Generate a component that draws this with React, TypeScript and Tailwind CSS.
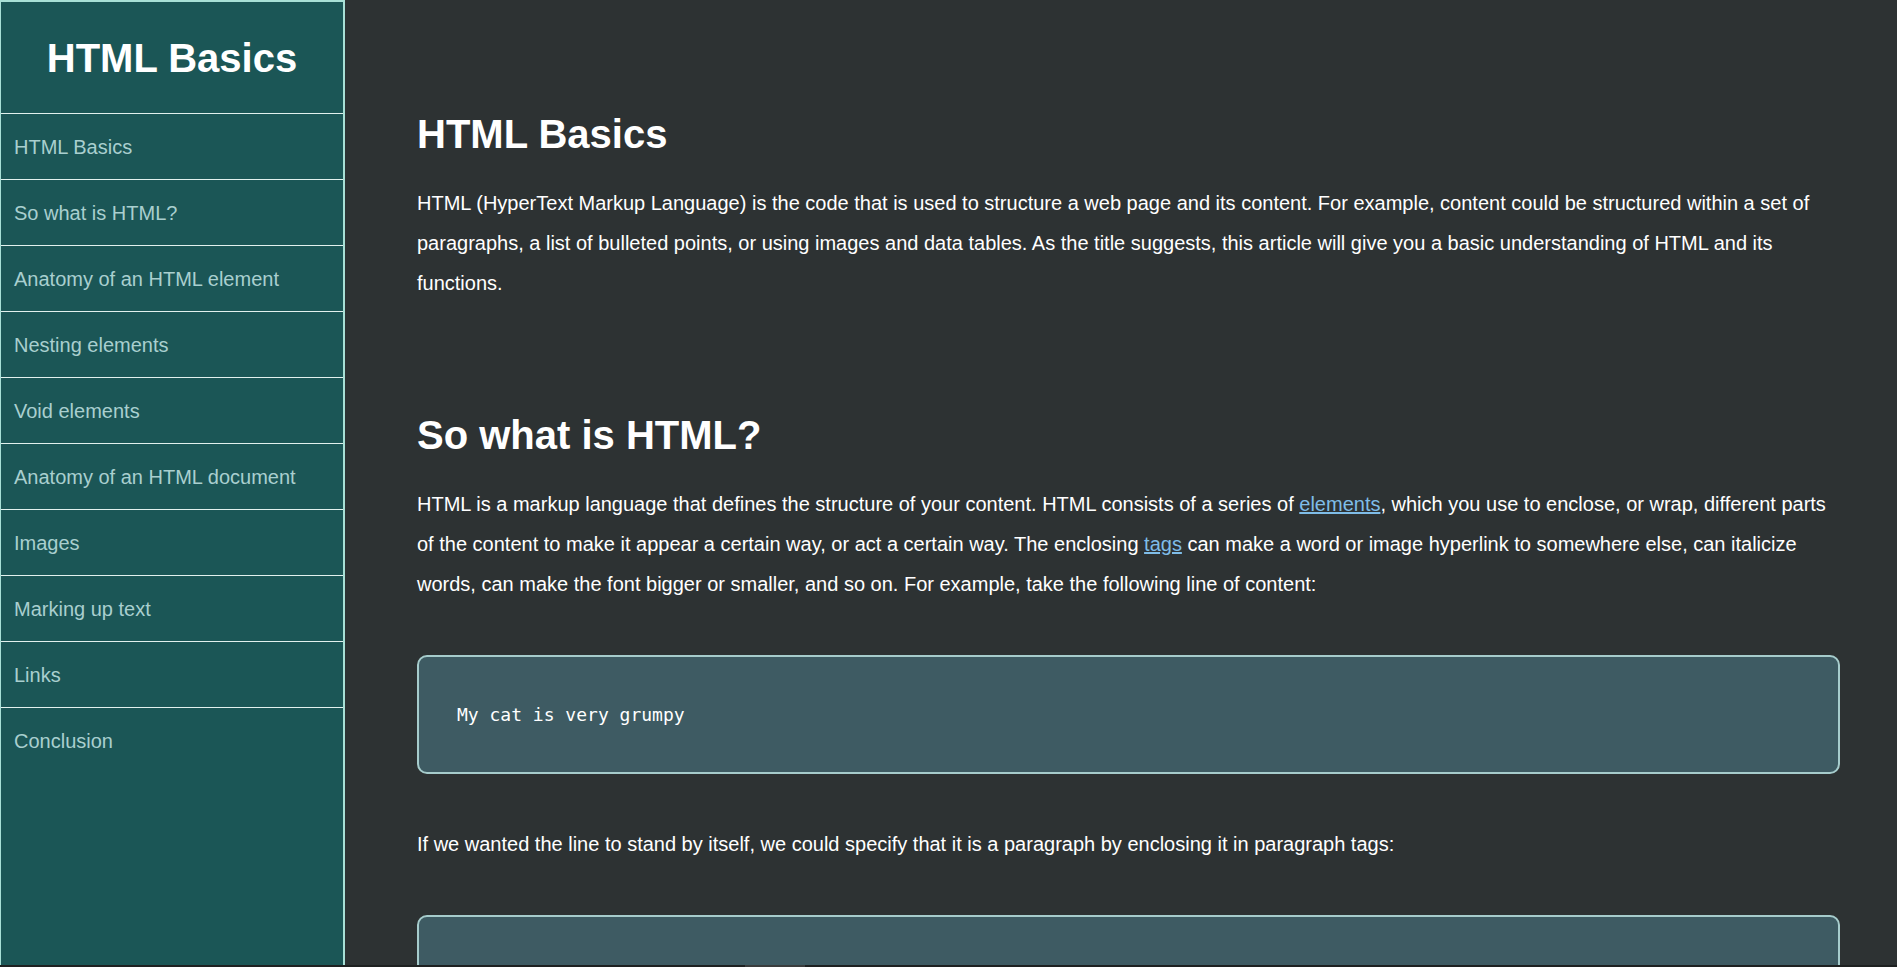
import React from "react";

const navItems = [
  "HTML Basics",
  "So what is HTML?",
  "Anatomy of an HTML element",
  "Nesting elements",
  "Void elements",
  "Anatomy of an HTML document",
  "Images",
  "Marking up text",
  "Links",
  "Conclusion",
];

function Code({ children }: { children: React.ReactNode }) {
  return (
    <pre
      className="mt-[51px] rounded-[10px] border-2 border-[#a6cccc] bg-[#3e5b63] px-[38px] py-[43px] text-[18px] leading-[29px] text-white"
      style={{ fontFamily: '"DejaVu Sans Mono", "Liberation Mono", monospace' }}
    >
      {children}
    </pre>
  );
}

export default function App() {
  return (
    <div
      className="flex min-h-screen bg-[#2d3233]"
      style={{ fontFamily: '"Liberation Sans", Arial, sans-serif' }}
    >
      <nav className="sticky top-0 flex h-screen w-[345px] shrink-0 flex-col border-l border-r-2 border-t-2 border-[#a8e0d6] bg-[#1b5656]">
        <header className="flex h-[111px] items-center justify-center">
          <h1 className="text-[40px] font-bold leading-[48px] text-white">HTML Basics</h1>
        </header>
        <ul className="flex flex-col">
          {navItems.map((item, i) => (
            <li
              key={item}
              className="flex h-[66px] items-center border-t border-[#e2f1ee] pl-[13px] text-[20px] text-[#a9cfcf]"
            >
              <a href={`#s${i}`}>{item}</a>
            </li>
          ))}
        </ul>
      </nav>
      <main className="min-w-0 flex-1 pb-[80px] pl-[72px] pr-[57px] pt-[110px] text-[20px] leading-[40px] text-white">
        <section id="s0">
          <h2 className="text-[40px] font-bold leading-[48px]">HTML Basics</h2>
          <p className="mt-[25px]">
            HTML (HyperText Markup Language) is the code that is used to structure a web page and its content. For
            example, content could be structured within a set of paragraphs, a list of bulleted points, or using images
            and data tables. As the title suggests, this article will give you a basic understanding of HTML and its
            functions.
          </p>
        </section>
        <section id="s1" className="mt-[108px]">
          <h2 className="text-[40px] font-bold leading-[48px]">So what is HTML?</h2>
          <p className="mt-[25px]">
            HTML is a markup language that defines the structure of your content. HTML consists of a series of{" "}
            <a href="#" className="text-[#7fbde8] underline">
              elements
            </a>
            , which you use to enclose, or wrap, different parts of the content to make it appear a certain way, or act
            a certain way. The enclosing{" "}
            <a href="#" className="text-[#7fbde8] underline">
              tags
            </a>{" "}
            can make a word or image hyperlink to somewhere else, can italicize words, can make the font bigger or
            smaller, and so on. For example, take the following line of content:
          </p>
          <Code>My cat is very grumpy</Code>
          <p className="mt-[50px]">
            If we wanted the line to stand by itself, we could specify that it is a paragraph by enclosing it in
            paragraph tags:
          </p>
          <Code>{"<p>My cat is very grumpy</p>"}</Code>
        </section>
        <section id="s2" className="mt-[108px]">
          <h2 className="text-[40px] font-bold leading-[48px]">Anatomy of an HTML element</h2>
          <p className="mt-[25px]">Let's further explore our paragraph element from the previous section.</p>
        </section>
      </main>
      <div className="fixed bottom-0 left-0 flex h-[2px] w-full bg-[#1e2121]">
        <div className="ml-[745px] h-full w-[60px] bg-[#3a3d3d]" />
      </div>
    </div>
  );
}
